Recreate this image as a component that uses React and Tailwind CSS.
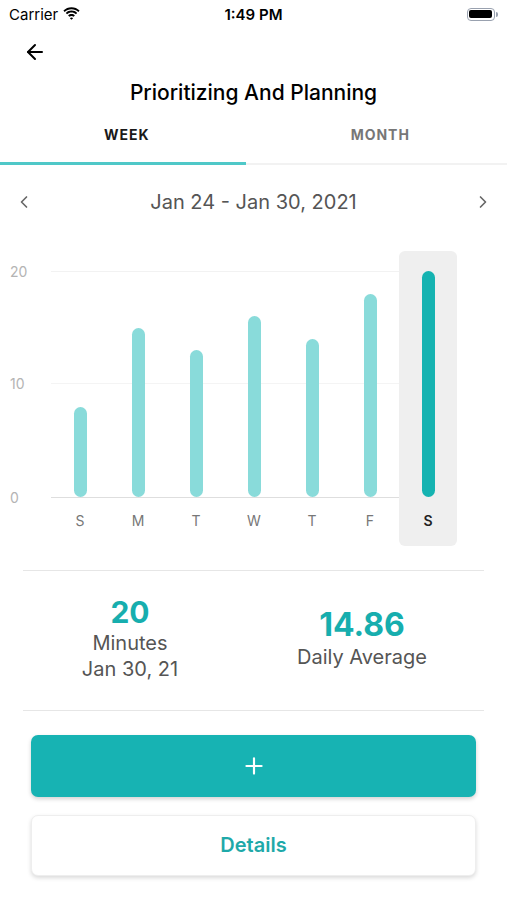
import { ArrowLeft, ChevronLeft, ChevronRight, Plus } from 'lucide-react';

const days = [
  { label: 'S', value: 8 },
  { label: 'M', value: 15 },
  { label: 'T', value: 13 },
  { label: 'W', value: 16 },
  { label: 'T', value: 14 },
  { label: 'F', value: 18 },
  { label: 'S', value: 20, active: true },
];

const MAX = 20;
const BAR_AREA = 226;

function StatusBar() {
  return (
    <div className="h-[28px] flex items-center justify-between px-[9px] text-black">
      <div className="flex items-center gap-[5px] w-[120px]">
        <span className="text-[15px] leading-none">Carrier</span>
        <svg width="17" height="13" viewBox="0 0 17 13" className="mt-[-2px]">
          <path d="M8.5 2.2c2.6 0 5 1 6.8 2.7l1.3-1.4C14.4 1.4 11.6.2 8.5.2S2.6 1.4.4 3.5l1.3 1.4C3.5 3.2 5.9 2.2 8.5 2.2z" fill="#000" />
          <path d="M8.5 5.6c1.7 0 3.2.6 4.4 1.7l1.3-1.4C12.6 4.4 10.7 3.6 8.5 3.6S4.4 4.4 2.8 5.9l1.3 1.4c1.2-1.1 2.7-1.700 4.4-1.700z" fill="#000" />
          <path d="M8.5 9c.8 0 1.5.3 2 .8l1.4-1.4C11 7.5 9.8 7 8.5 7S6 7.5 5.1 8.4l1.4 1.4c.5-.5 1.2-.8 2-.8z" fill="#000" />
          <path d="M8.5 12.8l1.6-1.6c-.4-.4-1-.6-1.6-.6s-1.2.2-1.6.6z" fill="#000" />
        </svg>
      </div>
      <span className="text-[15px] font-semibold leading-none">1:49 PM</span>
      <div className="w-[120px] flex justify-end items-center">
        <div className="w-[28px] h-[13px] rounded-[4px] border border-gray-400 p-[1.5px]">
          <div className="w-full h-full rounded-[2px] bg-black" />
        </div>
        <div className="w-[2px] h-[5px] rounded-r-sm bg-gray-400 ml-[1px]" />
      </div>
    </div>
  );
}

function Chart() {
  const lines = [
    { label: '20', top: 'top-[20px]', line: 'bg-[#f2f2f2]' },
    { label: '10', top: 'top-[132px]', line: 'bg-[#f4f4f4]' },
    { label: '0', top: 'top-[246px]', line: 'bg-[#dedede]' },
  ];
  return (
    <div className="relative mt-[32px] h-[295px]">
      {lines.map((l) => (
        <div key={l.label} className={`absolute left-0 right-[50px] ${l.top} h-0 flex items-center`}>
          <span className="w-[51px] pl-[10px] text-[14px] text-[#b4b4b4]">{l.label}</span>
          <div className={`flex-1 h-px ${l.line}`} />
        </div>
      ))}
      <div className="relative flex pl-[51px] h-full">
        {days.map((d, i) => (
          <div
            key={i}
            className={`w-[58px] h-full flex flex-col items-center rounded-[6px] ${d.active ? 'bg-[#efefef]' : ''}`}
          >
            <div className="h-[20px]" />
            <div className="h-[226px] flex items-end">
              <div
                className={`w-[13px] rounded-full ${d.active ? 'bg-[#15b3b1]' : 'bg-[#89dbda]'}`}
                style={{ height: `${(d.value / MAX) * BAR_AREA}px` }}
              />
            </div>
            <span
              className={`mt-[14px] text-[14px] leading-[20px] ${d.active ? 'text-[#222] font-semibold' : 'text-[#777]'}`}
            >
              {d.label}
            </span>
          </div>
        ))}
      </div>
    </div>
  );
}

export default function App() {
  return (
    <div className="w-[507px] h-[900px] bg-white overflow-hidden font-['Inter',sans-serif]">
      <StatusBar />

      {/* Nav */}
      <div className="h-[48px] flex items-center pl-[23px]">
        <ArrowLeft className="w-[24px] h-[24px] text-black" strokeWidth={2} />
      </div>
      <div className="h-[34px] flex items-center justify-center">
        <h1 className="text-[21px] font-medium text-black">Prioritizing And Planning</h1>
      </div>

      {/* Tabs */}
      <div className="h-[52px] flex pb-[4px]">
        <div className="w-1/2 flex items-center justify-center text-[14px] font-bold tracking-[0.07em] text-[#1a1a1a]">
          WEEK
        </div>
        <div className="w-1/2 flex items-center justify-center text-[14px] font-bold tracking-[0.07em] text-[#777]">
          MONTH
        </div>
      </div>
      <div className="flex h-[3px]">
        <div className="w-[246px] bg-[#4fc8c8]" />
        <div className="flex-1 flex items-end">
          <div className="w-full h-[2px] bg-[#f2f2f2]" />
        </div>
      </div>

      {/* Date range */}
      <div className="mt-[20px] h-[34px] flex items-center justify-between px-[14px]">
        <ChevronLeft className="w-[20px] h-[20px] text-[#666]" strokeWidth={2} />
        <span className="text-[20px] text-[#555]">Jan 24 - Jan 30, 2021</span>
        <ChevronRight className="w-[20px] h-[20px] text-[#666]" strokeWidth={2} />
      </div>

      <Chart />

      {/* Stats */}
      <div className="mt-[24px] mx-[23px] h-px bg-[#e6e6e6]" />
      <div className="h-[139px] ml-[14px] w-[464px] grid grid-cols-2 items-center pb-[4px]">
        <div className="flex flex-col items-center">
          <span className="text-[30px] leading-[34px] font-bold text-[#17aeae]">20</span>
          <span className="mt-[1px] text-[20px] leading-[26px] text-[#555]">Minutes</span>
          <span className="text-[20px] leading-[26px] text-[#555]">Jan 30, 21</span>
        </div>
        <div className="flex flex-col items-center">
          <span className="text-[32px] leading-[36px] font-bold text-[#17aeae]">14.86</span>
          <span className="mt-[1px] text-[20px] leading-[26px] text-[#555]">Daily Average</span>
        </div>
      </div>
      <div className="mx-[23px] h-px bg-[#e6e6e6]" />

      {/* Actions */}
      <button className="mt-[24px] mx-[31px] w-[445px] h-[62px] rounded-[7px] bg-[#17b3b3] shadow-[0_2px_4px_rgba(0,0,0,0.18)] flex items-center justify-center">
        <Plus className="w-[26px] h-[26px] text-white" strokeWidth={2} />
      </button>
      <button className="mt-[18px] mx-[31px] w-[445px] h-[61px] rounded-[7px] bg-white border border-[#eeeeee] shadow-[0_2px_4px_rgba(0,0,0,0.15)] flex items-center justify-center">
        <span className="text-[20px] font-semibold text-[#1fa9a9] pb-[2px]">Details</span>
      </button>
    </div>
  );
}
